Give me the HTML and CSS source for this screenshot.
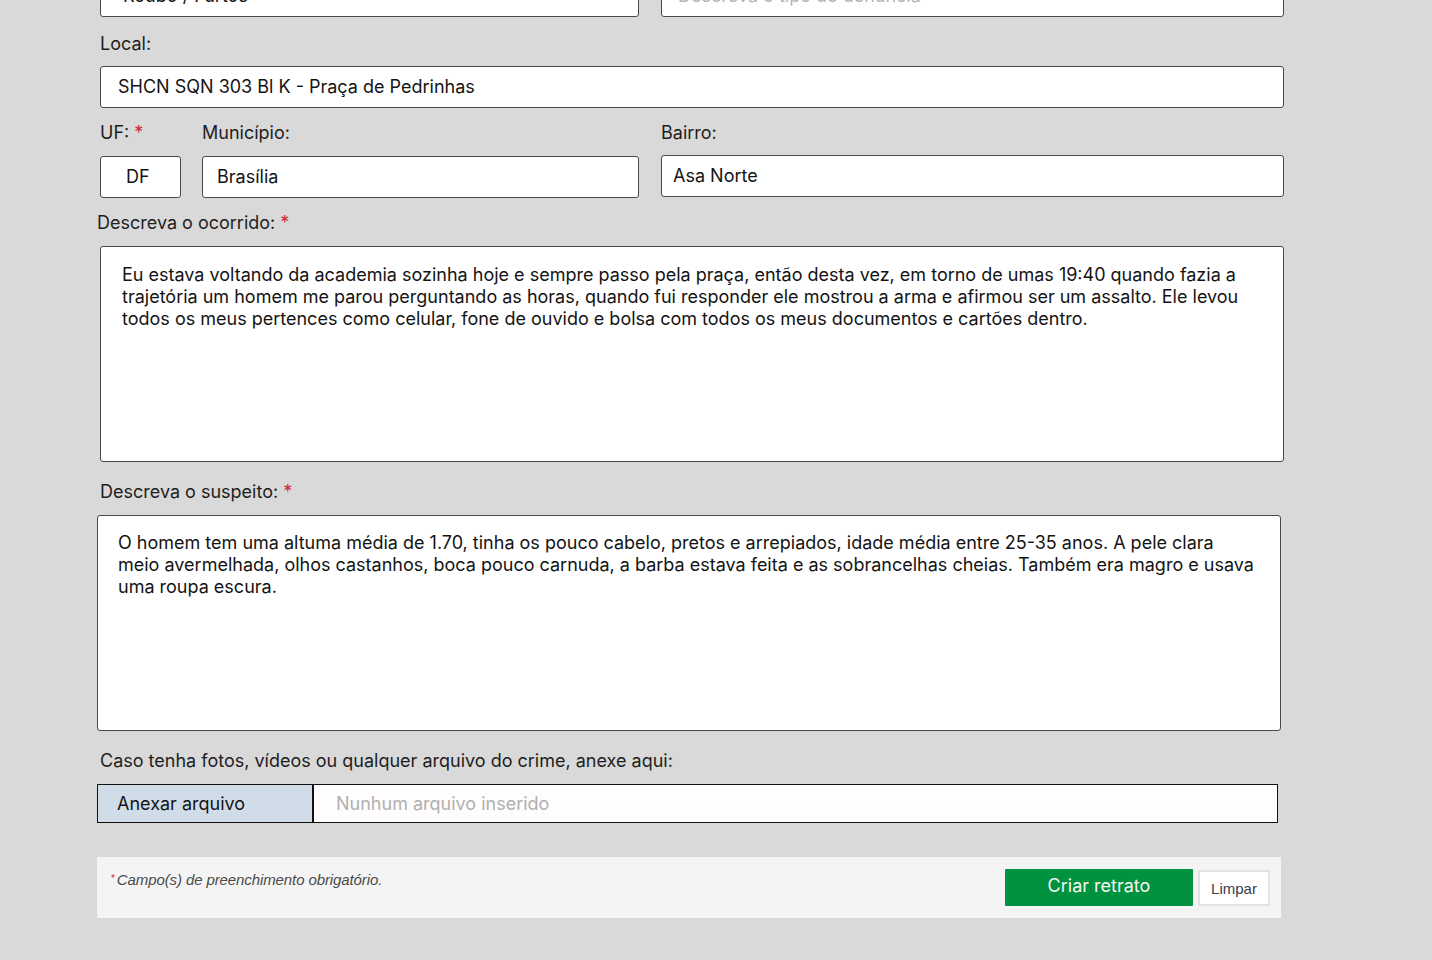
FILE: index.html
```html
<!DOCTYPE html>
<html lang="pt-BR">
<head>
<meta charset="utf-8">
<title>Denúncia</title>
<link rel="stylesheet" href="styles.css">
</head>
<body>
<form class="form">
  <div class="row-top">
    <div class="field"><div class="input">Roubo / Furtos</div></div>
    <div class="field"><div class="input placeholder">Descreva o tipo de denúncia</div></div>
  </div>

  <label class="label lbl-local">Local:</label>
  <div class="input input-local">SHCN SQN 303 Bl K - Praça de Pedrinhas</div>

  <div class="row-addr">
    <div class="col col-uf">
      <label class="label">UF: <span class="req">*</span></label>
      <div class="input input-uf">DF</div>
    </div>
    <div class="col col-mun">
      <label class="label">Município:</label>
      <div class="input input-mun">Brasília</div>
    </div>
    <div class="col col-bairro">
      <label class="label">Bairro:</label>
      <div class="input input-bairro">Asa Norte</div>
    </div>
  </div>

  <label class="label lbl-ocorrido">Descreva o ocorrido: <span class="req">*</span></label>
  <div class="textarea ta-ocorrido">Eu estava voltando da academia sozinha hoje e sempre passo pela praça, então desta vez, em torno de umas 19:40 quando fazia a trajetória um homem me parou perguntando as horas, quando fui responder ele mostrou a arma e afirmou ser um assalto. Ele levou todos os meus pertences como celular, fone de ouvido e bolsa com todos os meus documentos e cartões dentro.</div>

  <label class="label lbl-suspeito">Descreva o suspeito: <span class="req">*</span></label>
  <div class="textarea ta-suspeito">O homem tem uma altuma média de 1.70, tinha os pouco cabelo, pretos e arrepiados, idade média entre 25-35 anos. A pele clara meio avermelhada, olhos castanhos, boca pouco carnuda, a barba estava feita e as sobrancelhas cheias. Também era magro e usava uma roupa escura.</div>

  <label class="label lbl-anexo">Caso tenha fotos, vídeos ou qualquer arquivo do crime, anexe aqui:</label>
  <div class="file-row">
    <div class="file-btn">Anexar arquivo</div>
    <div class="file-name">Nunhum arquivo inserido</div>
  </div>

  <div class="footer">
    <p class="note"><span class="note-star">*</span>Campo(s) de preenchimento obrigatório.</p>
    <div class="actions">
      <button type="button" class="btn-primary">Criar retrato</button>
      <button type="button" class="btn-clear">Limpar</button>
    </div>
  </div>
</form>
</body>
</html>
```

FILE: styles.css
```css
html, body {
  margin: 0;
  padding: 0;
  background: #d9d9d9;
  height: 960px;
  overflow: hidden;
}
body {
  font-family: Inter, "Noto Sans", sans-serif;
  font-size: 18px;
  color: #141414;
}
.form {
  width: 1184px;
  margin-left: 100px;
  display: flex;
  flex-direction: column;
  align-items: flex-start;
}
.label {
  display: block;
  line-height: 22px;
  height: 22px;
  color: #1e1e1e;
  white-space: nowrap;
}
.req { color: #d0263a; }
.input {
  box-sizing: border-box;
  height: 42px;
  background: #fff;
  border: 1px solid #4a4a4a;
  border-radius: 3px;
  line-height: 40px;
  padding: 0 17px;
  white-space: nowrap;
  overflow: hidden;
}
.placeholder { color: #b4b4b4; }

.row-top {
  margin-top: -25px;
  display: grid;
  grid-template-columns: 539px 623px;
  column-gap: 22px;
  width: 1184px;
}
.row-top .input { padding-left: 22px; }
.row-top .placeholder { padding-left: 16px; }

.lbl-local { margin-top: 16px; }
.input-local {
  margin-top: 11px;
  width: 1184px;
}

.row-addr {
  margin-top: 14px;
  display: flex;
  width: 1184px;
}
.col { display: flex; flex-direction: column; }
.col .input { margin-top: 12px; }
.col-uf { width: 81px; }
.col-mun { width: 437px; margin-left: 21px; }
.col-bairro { width: 623px; margin-left: 22px; }
.input-uf { padding-left: 25px; }
.input-mun { padding-left: 14px; }
.input-bairro { padding-left: 11px; margin-top: 11px !important; }

.textarea {
  box-sizing: border-box;
  width: 1184px;
  height: 216px;
  background: #fff;
  border: 1px solid #4a4a4a;
  border-radius: 3px;
  line-height: 22px;
}
.lbl-ocorrido { margin-top: 14px; margin-left: -3px; }
.ta-ocorrido {
  margin-top: 12px;
  padding: 17px 40px 0 21px;
}
.lbl-suspeito { margin-top: 19px; }
.ta-suspeito {
  margin-top: 12px;
  margin-left: -3px;
  padding: 16px 25px 0 20px;
}

.lbl-anexo { margin-top: 19px; }
.file-row {
  margin-top: 12px;
  margin-left: -3px;
  box-sizing: border-box;
  width: 1181px;
  height: 39px;
  display: flex;
  border: 1px solid #111;
  background: #fff;
}
.file-btn {
  background: #d0dde9;
  border-right: 2px solid #111;
  line-height: 37px;
  padding-left: 19px;
  box-sizing: border-box;
  width: 216px;
}
.file-name {
  flex: 1;
  line-height: 37px;
  padding-left: 22px;
  color: #b0b0b0;
  background: #fffcfd;
}

.footer {
  margin-top: 34px;
  margin-left: -3px;
  width: 1184px;
  height: 61px;
  box-sizing: border-box;
  background: #f4f4f4;
  display: flex;
  justify-content: space-between;
  align-items: flex-start;
  padding: 0 11px 0 14px;
}
.note {
  margin: 13px 0 0;
  font-family: "Liberation Sans", Arial, sans-serif;
  font-style: italic;
  font-size: 15px;
  line-height: 18px;
  color: #4a4a4a;
  letter-spacing: -0.1px;
}
.note-star {
  color: #d0263a;
  font-size: 10px;
  font-style: normal;
  vertical-align: 3px;
  margin-right: 2px;
}
.actions {
  display: flex;
  align-items: flex-start;
  margin-top: 12px;
  gap: 5px;
}
.btn-primary {
  width: 188px;
  height: 37px;
  border: none;
  border-radius: 1px;
  background: #00923f;
  color: #f2f8f4;
  font-family: Inter, "Noto Sans", sans-serif;
  font-size: 18px;
  padding: 0 0 4px;
  cursor: pointer;
}
.btn-clear {
  margin-top: 1px;
  width: 72px;
  height: 36px;
  background: #fff;
  border: 2px solid #e2e2e2;
  border-radius: 1px;
  font-family: "Liberation Sans", Arial, sans-serif;
  font-size: 15px;
  color: #3b3b4a;
  padding: 0;
}
```
